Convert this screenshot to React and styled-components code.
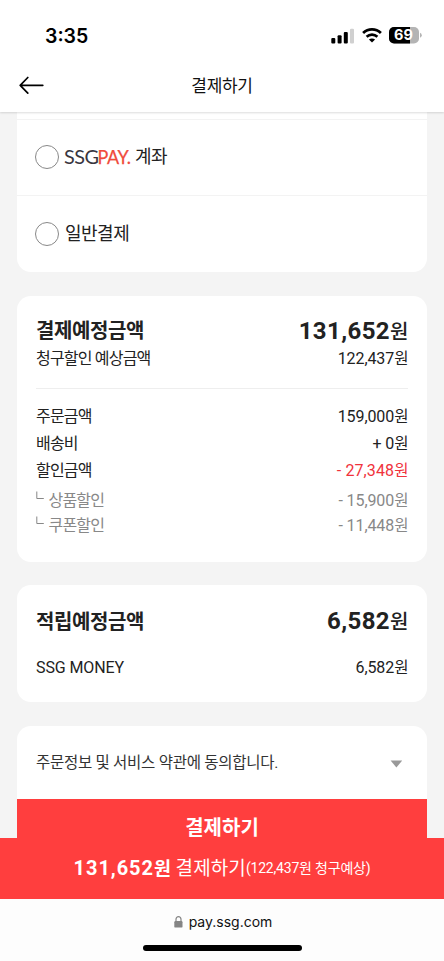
import React from "react";
import styled, { createGlobalStyle } from "styled-components";

const Global = createGlobalStyle`
  * { box-sizing: border-box; }
  html, body { margin: 0; padding: 0; background: #f4f4f4; }
  body { font-family: Roboto, "Noto Sans CJK KR", sans-serif; color: #222; }
`;

const Screen = styled.div`
  display: flex;
  flex-direction: column;
  width: 444px;
  height: 961px;
  overflow: hidden;
  background: #f4f4f4;
`;

const Top = styled.header`
  flex: none;
  height: 112px;
  background: #fff;
  box-shadow: 0 1px 2px rgba(0, 0, 0, 0.14);
  z-index: 1;
`;

const StatusBar = styled.div`
  display: flex;
  align-items: center;
  justify-content: space-between;
  height: 58px;
  padding: 13px 22px 0 45px;
`;

const Clock = styled.span`
  font: 600 19.5px/24px Inter, sans-serif;
  letter-spacing: 0;
  color: #000;
`;

const StatusIcons = styled.div`
  display: flex;
  align-items: center;
  gap: 7px;
  svg { display: block; }
`;

const NavBar = styled.div`
  display: grid;
  grid-template-columns: 60px 1fr 60px;
  align-items: center;
  height: 54px;
  svg { display: block; margin-left: 19px; }
`;

const NavTitle = styled.h1`
  margin: 0;
  padding-top: 2px;
  text-align: center;
  font-size: 17px;
  line-height: 24px;
  font-weight: 400;
  letter-spacing: -0.3px;
  color: #111;
`;

const Content = styled.main`
  flex: 1;
  min-height: 0;
  overflow: hidden;
  display: flex;
  flex-direction: column;
  gap: 23.5px;
  padding: 0 17px;
`;

const Card = styled.section`
  flex: none;
  display: flex;
  flex-direction: column;
  height: ${(p) => p.$h}px;
  padding: ${(p) => p.$pad || "0 19px"};
  background: #fff;
  border-radius: ${(p) => (p.$cutTop ? "0 0 14px 14px" : "14px")};
  overflow: hidden;
`;

const PayOption = styled.label`
  display: flex;
  align-items: center;
  height: 76.5px;
  padding-left: 18px;
  border-top: 1px solid #f3f3f3;
  font-size: 18px;
  line-height: 24px;
  letter-spacing: -0.5px;
`;

const Radio = styled.span`
  width: 24px;
  height: 24px;
  margin-right: 6px;
  border: 1px solid #888;
  border-radius: 50%;
`;

const Logo = styled.svg`
  display: block;
  margin: 0 3px 0 -1px;
`;

const Row = styled.div`
  display: flex;
  flex: none;
  align-items: center;
  justify-content: space-between;
  height: ${(p) => p.$h}px;
  line-height: ${(p) => p.$h}px;
  font-size: 16px;
  color: ${(p) => p.$color || "#222"};
`;

const Label = styled.span`
  letter-spacing: -0.8px;
`;

const Heading = styled.h2`
  margin: 0;
  padding-top: 1px;
  font-size: 20px;
  font-weight: 700;
  letter-spacing: -0.4px;
`;

const Amount = styled.span`
  letter-spacing: ${(p) => (p.$color ? "0.1px" : "-0.1px")};
  color: ${(p) => p.$color || "inherit"};
`;

const Total = styled.strong`
  font-size: 24px;
  font-weight: 700;
  letter-spacing: 0.4px;
`;

const Won = styled.span`
  font-size: ${(p) => p.$size || 15.5}px;
  font-weight: ${(p) => p.$weight || 400};
  letter-spacing: -0.4px;
  line-height: 1;
`;

const Branch = styled.svg`
  display: inline-block;
  margin-right: 4.5px;
  vertical-align: 6px;
`;

const Rule = styled.hr`
  flex: none;
  width: 100%;
  height: 1px;
  margin: 16px 0 14px;
  border: 0;
  background: #eee;
`;

const Terms = styled.div`
  display: flex;
  flex: none;
  align-items: center;
  justify-content: space-between;
  height: 73px;
  padding: 1px 24px 0 19px;
  font-size: 15.5px;
  line-height: 24px;
  letter-spacing: -0.27px;
  color: #333;
  svg { margin-top: 2px; }
`;

const CardButton = styled.button`
  flex: none;
  height: 70px;
  padding: 19px 0 31px;
  border: 0;
  background: #ff3e3e;
  color: #fff;
  font: 700 20px/20px Roboto, "Noto Sans CJK KR", sans-serif;
  letter-spacing: 0;
`;

const PayBar = styled.button`
  flex: none;
  display: flex;
  align-items: baseline;
  justify-content: center;
  height: 61px;
  padding: 0;
  border: 0;
  background: #ff3e3e;
  color: #fff;
  font: 400 19px/61px Roboto, "Noto Sans CJK KR", sans-serif;
`;

const PayTotal = styled.span`
  font-size: 20px;
  font-weight: 700;
  letter-spacing: 0.95px;
  margin-right: 5px;
`;

const PayAction = styled.span`
  letter-spacing: 0.1px;
`;

const PayNote = styled.span`
  margin-bottom: 1px;
  align-self: center;
  font-size: 14px;
  letter-spacing: -0.2px;
`;

const Browser = styled.footer`
  flex: none;
  display: flex;
  flex-direction: column;
  align-items: center;
  height: 62px;
  background: #fdfdfd;
`;

const Address = styled.div`
  display: flex;
  align-items: center;
  gap: 6px;
  height: 46px;
  padding-left: 2px;
  font: 400 14px/46px Inter, sans-serif;
  color: #111;
`;

const HomeIndicator = styled.div`
  width: 159px;
  height: 6px;
  border-radius: 3px;
  background: #000;
`;

const Signal = () => (
  <svg width="24" height="16" viewBox="0 0 24 16">
    <rect x="0.3" y="10" width="4" height="5.5" rx="1.1" />
    <rect x="6.6" y="7.2" width="4" height="8.3" rx="1.1" />
    <rect x="12.8" y="4" width="4" height="11.5" rx="1.1" />
    <rect x="19" y="0.8" width="4" height="14.7" rx="1.1" fill="#d0d0d0" />
  </svg>
);

const Wifi = () => (
  <svg width="20" height="15" viewBox="0 0 20 15" fill="none" stroke="#000">
    <path d="M1.1 5.1C6.2 0.2 13.8 0.2 18.9 5.1" strokeWidth="2.8" />
    <path d="M4.6 8.8C7.7 5.9 12.3 5.9 15.4 8.8" strokeWidth="2.6" />
    <path d="M6.9 11.6C8.8 10 11.2 10 13.1 11.6L10 14.6Z" fill="#000" stroke="none" />
  </svg>
);

const Battery = () => (
  <svg width="33" height="17" viewBox="0 0 33 17">
    <defs>
      <clipPath id="cell"><rect width="30" height="16.5" rx="5" /></clipPath>
    </defs>
    <g clipPath="url(#cell)">
      <rect width="30" height="17" fill="#b4b4b4" />
      <rect width="21" height="17" fill="#000" />
    </g>
    <path d="M31 5.8Q32.8 6.4 32.8 8.3T31 10.8Z" fill="#b4b4b4" />
    <text x="5" y="13.3" fill="#fff" fontFamily="Inter, sans-serif" fontWeight="700" fontSize="14" textLength="18.8" lengthAdjust="spacingAndGlyphs">69</text>
  </svg>
);

const BackArrow = () => (
  <svg width="26" height="18" viewBox="0 0 26 18" fill="none" stroke="#000" strokeWidth="1.7" strokeLinecap="round" strokeLinejoin="round">
    <path d="M23.8 9.3H1.2M8.8 1.5L1.2 9.3L8.8 17.1" />
  </svg>
);

const SsgPay = () => (
  <Logo width="68" height="26" viewBox="0 0 68 26" fontFamily="Lato, sans-serif" fontSize="19.5">
    <text x="0" y="19.5" fill="#39363f" textLength="34.5" lengthAdjust="spacingAndGlyphs">SSG</text>
    <text x="33.6" y="19.5" fill="#f04b3c" stroke="#f04b3c" strokeWidth="0.25" textLength="33" lengthAdjust="spacingAndGlyphs">PAY.</text>
  </Logo>
);

const Corner = () => (
  <Branch width="8" height="9" viewBox="0 0 8 9" fill="none" stroke="#888">
    <path d="M0.8 0.5V7.5H7.8" />
  </Branch>
);

const Lock = () => (
  <svg width="9" height="12" viewBox="0 0 9 12">
    <path d="M2 6V3.2a2.5 2.5 0 0 1 5 0V6" fill="none" stroke="#858585" strokeWidth="1.2" />
    <rect x="0.3" y="5" width="8.2" height="6.6" rx="1.2" fill="#858585" />
  </svg>
);

const LINES = [
  { label: "주문금액", value: "159,000", h: 27 },
  { label: "배송비", value: "+ 0", h: 27 },
  { label: "할인금액", value: "- 27,348", h: 28, valueColor: "#f0323c" },
  { label: "상품할인", value: "- 15,900", h: 31, color: "#888", sub: true },
  { label: "쿠폰할인", value: "- 11,448", h: 20, color: "#888", sub: true },
];

export default function App() {
  return (
    <>
      <Global />
      <Screen>
        <Top>
          <StatusBar>
            <Clock>3:35</Clock>
            <StatusIcons>
              <Signal />
              <Wifi />
              <Battery />
            </StatusIcons>
          </StatusBar>
          <NavBar>
            <BackArrow />
            <NavTitle>결제하기</NavTitle>
          </NavBar>
        </Top>

        <Content>
          <Card $h={160} $pad="6.5px 0 0" $cutTop>
            <PayOption><Radio /><SsgPay />계좌</PayOption>
            <PayOption><Radio />일반결제</PayOption>
          </Card>

          <Card $h={266} $pad="20px 19px 0">
            <Row $h={30}>
              <Heading>결제예정금액</Heading>
              <Total>131,652<Won $size={20} $weight={500}>원</Won></Total>
            </Row>
            <Row $h={26}>
              <Label>청구할인 예상금액</Label>
              <Amount>122,437<Won>원</Won></Amount>
            </Row>
            <Rule />
            {LINES.map((l) => (
              <Row key={l.label} $h={l.h} $color={l.color}>
                <Label>{l.sub && <Corner />}{l.label}</Label>
                <Amount $color={l.valueColor}>{l.value}<Won>원</Won></Amount>
              </Row>
            ))}
          </Card>

          <Card $h={117} $pad="21px 19px 0">
            <Row $h={30}>
              <Heading>적립예정금액</Heading>
              <Total>6,582<Won $size={20} $weight={500}>원</Won></Total>
            </Row>
            <Row $h={63}>
              <Amount>SSG MONEY</Amount>
              <Amount>6,582<Won>원</Won></Amount>
            </Row>
          </Card>

          <Card $h={143} $pad="0">
            <Terms>
              주문정보 및 서비스 약관에 동의합니다.
              <svg width="13" height="8" viewBox="0 0 13 8"><path d="M0.6 0.5H12.2L6.4 7.6Z" fill="#999" /></svg>
            </Terms>
            <CardButton>결제하기</CardButton>
          </Card>
        </Content>

        <PayBar>
          <PayTotal>131,652<Won $size={18.5} $weight={700}>원</Won></PayTotal>
          <PayAction>결제하기</PayAction>
          <PayNote>(122,437원 청구예상)</PayNote>
        </PayBar>
        <Browser>
          <Address><Lock />pay.ssg.com</Address>
          <HomeIndicator />
        </Browser>
      </Screen>
    </>
  );
}
